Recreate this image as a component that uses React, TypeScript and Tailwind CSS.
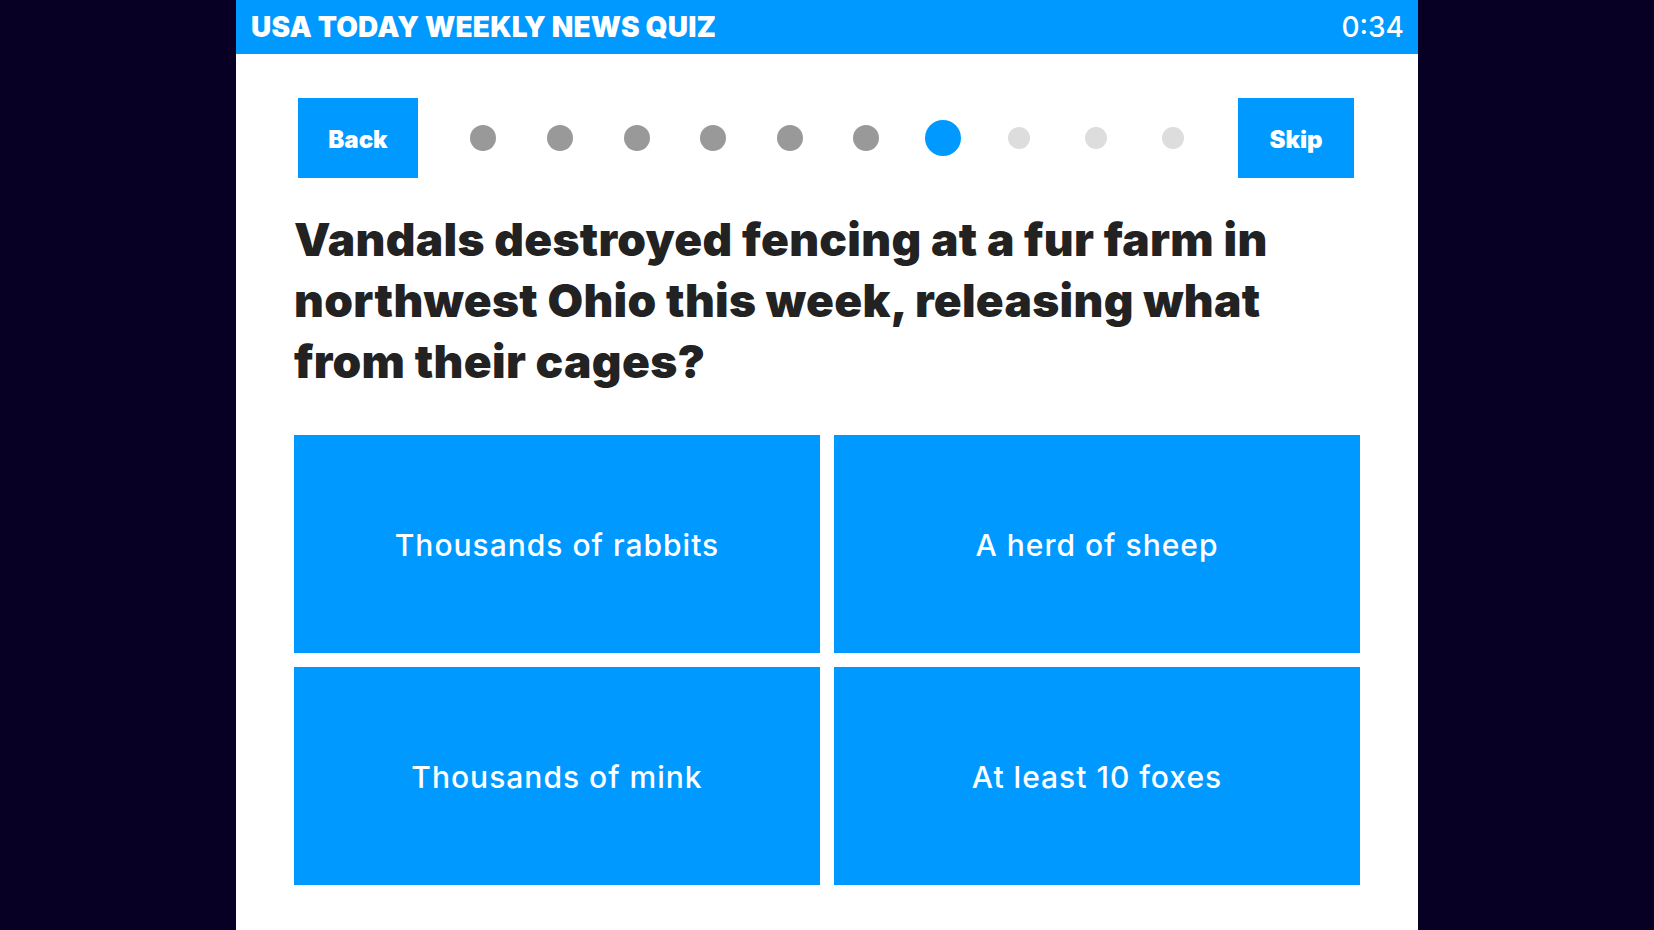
const answers = [
  'Thousands of rabbits',
  'A herd of sheep',
  'Thousands of mink',
  'At least 10 foxes',
];

// 0..5 answered, 6 current, 7..9 upcoming
const dots = [0, 1, 2, 3, 4, 5, 6, 7, 8, 9];
const current = 6;

export default function App() {
  return (
    <div className="min-h-screen w-full bg-[#080024] font-['Inter',sans-serif]">
      <div className="mx-auto flex h-[930px] w-[1182px] flex-col bg-white">
        {/* header */}
        <div className="flex h-[54px] shrink-0 items-center justify-between bg-[#0099ff] pl-[15px] pr-[14px] text-white">
          <span className="text-[28px] font-black leading-none tracking-[0.2px]">
            USA TODAY WEEKLY NEWS QUIZ
          </span>
          <span className="text-[28px] font-medium leading-none">0:34</span>
        </div>

        {/* nav */}
        <div className="mt-[44px] flex items-center justify-between pl-[62px] pr-[64px]">
          <button className="h-[80px] w-[120px] bg-[#0099ff] pt-[3px] text-[24px] font-black text-white">
            Back
          </button>
          <div className="flex items-center">
            {dots.map((d) => (
              <div key={d} className="flex w-[76.6px] items-center justify-center">
                {d < current && <div className="h-[26px] w-[26px] rounded-full bg-[#999999]" />}
                {d === current && <div className="h-[36px] w-[36px] rounded-full bg-[#0099ff]" />}
                {d > current && <div className="h-[22px] w-[22px] rounded-full bg-[#dddddd]" />}
              </div>
            ))}
          </div>
          <button className="h-[80px] w-[116px] bg-[#0099ff] pt-[3px] text-[24px] font-black text-white">
            Skip
          </button>
        </div>

        {/* question + answers */}
        <div className="flex flex-col px-[58px]">
          <h1 className="mt-[31px] max-w-[1000px] text-[46px] font-black leading-[61px] tracking-[0.3px] text-[#222222]">
            Vandals destroyed fencing at a fur farm in northwest Ohio this week, releasing what
            from their cages?
          </h1>
          <div className="mt-[43px] grid grid-cols-2 gap-[14px]">
            {answers.map((a) => (
              <button
                key={a}
                className="flex h-[218px] items-center justify-center bg-[#0099ff] pt-[2px] text-[30px] font-medium tracking-[1px] text-white"
              >
                {a}
              </button>
            ))}
          </div>
        </div>
      </div>
    </div>
  );
}
